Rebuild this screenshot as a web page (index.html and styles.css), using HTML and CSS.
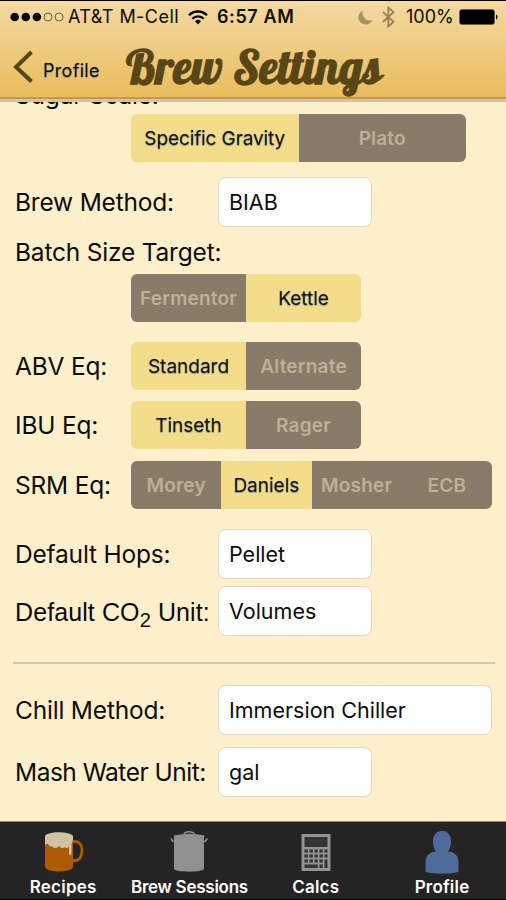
FILE: index.html
```html
<!DOCTYPE html>
<html lang="en">
<head>
    <meta charset="UTF-8">
    <meta name="viewport" content="width=device-width, initial-scale=1.0">
    <title>Brew Settings</title>
    <link rel="stylesheet" href="styles.css">
</head>
<body>
    <header class="header">
        <div class="status-bar">
            <svg class="signal" width="54" height="10" viewBox="0 0 54 10">
                <g fill="#000">
                    <circle cx="4.7" cy="5" r="4.3"/>
                    <circle cx="15.8" cy="5" r="4.3"/>
                    <circle cx="26.9" cy="5" r="4.3"/>
                </g>
                <g fill="none" stroke="#4a3f28" stroke-width="0.8">
                    <circle cx="38" cy="5" r="4"/>
                    <circle cx="49.1" cy="5" r="4"/>
                </g>
            </svg>
            <span class="carrier">AT&amp;T M-Cell</span>
            <svg class="wifi" width="20" height="15" viewBox="0 0 20 15">
                <g fill="none" stroke="#000" stroke-width="2.3">
                    <path d="M1 5.2a12.8 12.8 0 0 1 18 0"/>
                    <path d="M4.3 8.7a8.1 8.1 0 0 1 11.4 0"/>
                </g>
                <path d="M10 14.4l-3-3.1a4.3 4.3 0 0 1 6 0z" fill="#000"/>
            </svg>
            <span class="time">6:57 AM</span>
            <svg class="moon" width="15" height="15" viewBox="0 0 15 15">
                <path d="M5 .7a7.2 7.2 0 1 0 9.4 9.3A7.3 7.3 0 0 1 5 .7z" fill="#a8925f"/>
            </svg>
            <svg class="bluetooth" width="13" height="22" viewBox="0 0 13 22">
                <path d="M1 6l10.5 9.8L6.3 20.5v-19l5.2 4.7L1 16" fill="none" stroke="#998354" stroke-width="1.8"/>
            </svg>
            <span class="percent">100%</span>
            <svg class="battery" width="39" height="16" viewBox="0 0 39 16">
                <rect x=".5" y=".5" width="35" height="15" rx="2.5" fill="none" stroke="#6b5a33" stroke-width="1"/>
                <rect x="1" y="1" width="34" height="14" rx="1.5" fill="#000"/>
                <path d="M37 5.2q1.6 1 1.6 2.8T37 10.8z" fill="#000"/>
            </svg>
        </div>
        <div class="nav-bar">
            <svg class="back-arrow" width="21" height="34" viewBox="0 0 21 34">
                <path d="M19.5 2L4 17l15.500 14.500" fill="none" stroke="#594616" stroke-width="4"/>
            </svg>
            <span class="back-label">Profile</span>
            <h1 class="title">Brew Settings</h1>
        </div>
    </header>

    <main class="settings">
        <div class="row row-sugar"><span class="label">Sugar Scale:</span></div>
        <div class="row row-scale">
            <div class="segmented wide">
                <span class="segment active">Specific Gravity</span>
                <span class="segment">Plato</span>
            </div>
        </div>
        <div class="row row-method">
            <span class="label">Brew Method:</span>
            <div class="field">BIAB</div>
        </div>
        <div class="row row-target"><span class="label">Batch Size Target:</span></div>
        <div class="row row-batch">
            <div class="segmented">
                <span class="segment">Fermentor</span>
                <span class="segment active">Kettle</span>
            </div>
        </div>
        <div class="row row-abv">
            <span class="label">ABV Eq:</span>
            <div class="segmented">
                <span class="segment active">Standard</span>
                <span class="segment">Alternate</span>
            </div>
        </div>
        <div class="row row-ibu">
            <span class="label">IBU Eq:</span>
            <div class="segmented">
                <span class="segment active">Tinseth</span>
                <span class="segment">Rager</span>
            </div>
        </div>
        <div class="row row-srm">
            <span class="label">SRM Eq:</span>
            <div class="segmented full">
                <span class="segment">Morey</span>
                <span class="segment active">Daniels</span>
                <span class="segment">Mosher</span>
                <span class="segment">ECB</span>
            </div>
        </div>
        <div class="row row-hops">
            <span class="label">Default Hops:</span>
            <div class="field">Pellet</div>
        </div>
        <div class="row row-co2">
            <span class="label label-co2">Default CO<sub>2</sub> Unit:</span>
            <div class="field">Volumes</div>
        </div>
        <hr class="divider">
        <div class="row row-chill">
            <span class="label">Chill Method:</span>
            <div class="field field-long">Immersion Chiller</div>
        </div>
        <div class="row row-mash">
            <span class="label label-mash">Mash Water Unit:</span>
            <div class="field">gal</div>
        </div>
    </main>

    <nav class="tab-bar">
        <div class="tab">
            <svg width="44" height="44" viewBox="0 0 44 44">
                <path d="M31 11.500h2.500c5 0 7.500 4 7.500 8.500 0 6-2.500 10.500-6.500 10.500h-3" fill="none" stroke="#ad5b04" stroke-width="2.800"/>
                <path d="M4 6v31c2 6 26 6 28 0V6z" fill="#ad5b04"/>
                <path d="M4 6C7 1 28 1 32 6v4l-1.500 4v10c-.5 1.500-2 1.500-2.500 0v-8c-1 2.500-3 2.500-4.500 1-1.500 2-3.500 1.500-5-1-2.500 2-5 3-7 .5-2 .8-4-1.500-5-3L4 15z" fill="#d0c3a5"/>
            </svg>
            <span>Recipes</span>
        </div>
        <div class="tab tab-sessions">
            <svg width="44" height="44" viewBox="0 0 44 44">
                <path d="M17 4c1-3 9-3 10.500 0" fill="none" stroke="#909090" stroke-width="1.500"/>
                <path d="M7 5.500Q22 2 37.500 5.500L37 8v31c-1 3.500-29 3.500-30 0V8z" fill="#909090"/>
                <path d="M7 11.500l-1.500-.5-1.500-2.500M37 11.500l1.500-.5 2-2.500" fill="none" stroke="#909090" stroke-width="1.500"/>
            </svg>
            <span>Brew Sessions</span>
        </div>
        <div class="tab tab-calcs">
            <svg width="44" height="44" viewBox="0 0 44 44">
                <path d="M7.500 4H36.500V41H7.500z" fill="#929292"/>
                <path d="M10.500 7h23v10h-23zM10.500 19.500h3.300v3h-3.300zm5 0h3.300v3h-3.300zm5 0h3.300v3h-3.300zm5 0h3.300v3h-3.300zm5 0h3v3h-3zM10.500 24.500h3.300v3h-3.300zm5 0h3.300v3h-3.300zm5 0h3.300v3h-3.300zm5 0h3.300v3h-3.300zm5 0h3v3h-3zM10.500 29.500h3.300v3h-3.300zm5 0h3.300v3h-3.300zm5 0h3.300v3h-3.300zm5 0h3.300v3h-3.300zm5 0h3v8.500h-3zM10.500 34.500h13.300v3.500h-13.300zM25.500 34.500h3.300v3.500h-3.300z" fill="#343434"/>
            </svg>
            <span>Calcs</span>
        </div>
        <div class="tab tab-profile">
            <svg width="44" height="44" viewBox="0 0 44 44">
                <path d="M22 1c6 0 9 4.500 9 10 0 4.500-1 8-3 10.500 7 .5 10.500 4.500 10.500 10.500v9.500c-4 3-29 3-33 0V32c0-6 3.500-10 10.500-10.500-2-2.500-3-6-3-10.500 0-5.500 3-10 9-10z" fill="#4e6b99"/>
            </svg>
            <span>Profile</span>
        </div>
    </nav>
</body>
</html>
```
FILE: styles.css
```css
:root {
    --background-color: #ffefcb;
    --active-color: #f3dd8a;
    --inactive-color: #887c68;
    --brown-color: #594616;
}

* {
    box-sizing: border-box;
}

body {
    margin: 0;
    height: 900px;
    display: flex;
    flex-direction: column;
    overflow: hidden;
    background: var(--background-color);
    color: #0c0c0a;
    font-family: Inter, "Liberation Sans", sans-serif;
}

svg {
    display: block;
    flex: none;
}

/* Header */
.header {
    flex: none;
    height: 99px;
    border-top: 1px solid #000;
    border-bottom: 2px solid #c49a47;
    background: linear-gradient(#f3d9a2, #eabd5d);
    box-shadow: 0 3px 0 #d4c6a4;
    z-index: 1;
}

.status-bar {
    display: flex;
    align-items: center;
    height: 32px;
    padding-left: 10px;
    font-size: 18px;
    line-height: 32px;
    white-space: nowrap;
}

.carrier {
    width: 111px;
    margin-left: 4px;
    letter-spacing: 0.45px;
}

.wifi {
    margin: 0 9px 0 9px;
}

.time {
    width: 78px;
    font-weight: 600;
    letter-spacing: 0.6px;
}

.moon {
    margin-left: 63px;
}

.bluetooth {
    margin-left: 9px;
}

.percent {
    width: 48px;
    margin-left: 11px;
}

.battery {
    margin-left: 5px;
}

.nav-bar {
    display: flex;
    align-items: center;
    height: 64px;
    padding-left: 12px;
}

.back-arrow {
    margin-top: 4px;
}

.back-label {
    width: 75px;
    margin: 10px 0 0 10px;
    font-size: 18px;
    letter-spacing: 0.3px;
    text-shadow: 0 1px 1px #8c94a0;
}

.title {
    margin: 4px 0 0 8px;
    color: var(--brown-color);
    font-family: Lobster, "Liberation Serif", serif;
    font-size: 46px;
    font-weight: 700;
    letter-spacing: 0.5px;
    line-height: 56px;
    white-space: nowrap;
}

/* Settings list */
.settings {
    flex: 1;
    min-height: 0;
    overflow: hidden;
    padding-left: 15px;
}

.row {
    display: flex;
    align-items: center;
    height: 48px;
    white-space: nowrap;
}

.row-sugar,
.row-target {
    height: 30px;
}

.row-sugar {
    margin-top: -19px;
}

.row-scale {
    margin-top: 4px;
}

.row-method {
    height: 50px;
    margin-top: 15px;
}

.row-target {
    margin-top: 10px;
}

.row-batch {
    margin-top: 7px;
}

.row-abv {
    margin-top: 20px;
}

.row-ibu {
    margin-top: 11px;
}

.row-srm {
    margin-top: 12px;
}

.row-hops {
    height: 50px;
    margin-top: 20px;
}

.row-co2 {
    height: 50px;
    margin-top: 7px;
}

.row-chill {
    height: 50px;
    margin-top: 21px;
}

.row-mash {
    height: 50px;
    margin-top: 12px;
}

.label {
    font-size: 24.5px;
    letter-spacing: -0.2px;
}

.label-mash {
    letter-spacing: -0.5px;
}

.label-co2 {
    padding-top: 2px;
    font-family: "Liberation Sans", Arial, sans-serif;
    font-size: 25px;
    letter-spacing: 0.1px;
}

.label-co2 sub {
    font-size: 20px;
    line-height: 0;
    vertical-align: -6px;
}

.segmented {
    display: flex;
    width: 230px;
    height: 48px;
    margin-left: auto;
    margin-right: 145px;
    border-radius: 6px;
    overflow: hidden;
}

.segmented.wide {
    width: 335px;
    margin-right: 40px;
}

.segmented.full {
    width: 361px;
    margin-right: 14px;
}

.segment {
    flex: 1 1 0;
    min-width: 0;
    background: var(--inactive-color);
    color: #bdb097;
    font-size: 19px;
    font-weight: 600;
    letter-spacing: 0.2px;
    line-height: 49px;
    text-align: center;
}

.segment.active {
    background: var(--active-color);
    color: #11110d;
    font-weight: 400;
    letter-spacing: 0;
    text-shadow: 0 1px 1px #8c94a0;
}

.wide .segment.active {
    letter-spacing: -0.1px;
}

.field {
    width: 154px;
    height: 50px;
    margin-left: auto;
    margin-right: 134px;
    padding-left: 10px;
    border: 1px solid #e0d8c8;
    border-radius: 8px;
    background: #fff;
    font-size: 21.5px;
    line-height: 48px;
}

.field-long {
    width: 274px;
    margin-right: 14px;
}

.divider {
    height: 2px;
    margin: 26px 11px 0 -2px;
    border: 0;
    background: #d0c7b2;
}

/* Bottom tabs */
.tab-bar {
    display: flex;
    flex: none;
    height: 79px;
    border-top: 1px solid #8d8775;
    border-bottom: 1px solid #000;
    background: #242424;
}

.tab {
    display: flex;
    flex: none;
    flex-direction: column;
    align-items: center;
    width: 126.3px;
    padding-top: 8px;
    color: #fff;
    font-size: 17px;
    font-weight: 600;
    letter-spacing: 0.2px;
    line-height: 26px;
    white-space: nowrap;
}

.tab-sessions {
    letter-spacing: -0.25px;
}
```
